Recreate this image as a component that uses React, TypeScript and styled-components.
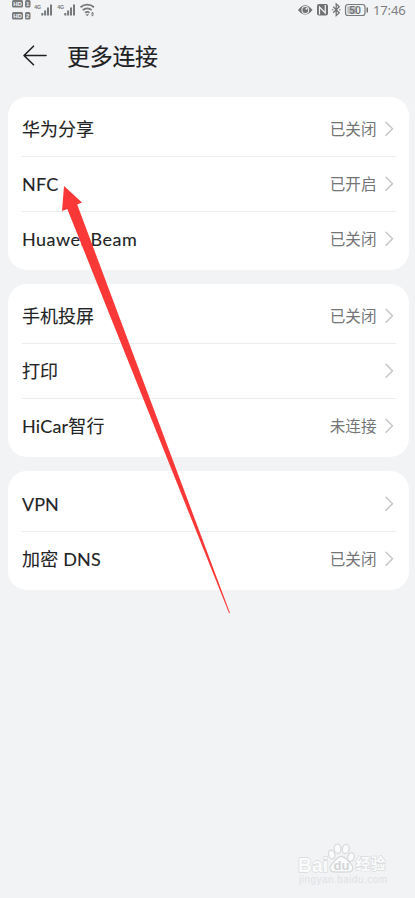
import React from 'react';
import styled, { createGlobalStyle } from 'styled-components';

const GlobalStyle = createGlobalStyle`
  * { box-sizing: border-box; }
  html, body { margin: 0; background: #f1f3f5; }
  body { font-family: Roboto, 'Noto Sans CJK SC', sans-serif; }
`;

const Screen = styled.div`
  position: relative;
  display: flex;
  flex-direction: column;
  width: 415px;
  height: 898px;
  overflow: hidden;
  background: #f1f3f5;
`;

const StatusBar = styled.div`
  display: flex;
  justify-content: space-between;
  height: 24px;
  padding: 0 9px 0 11px;
`;

const StatusGroup = styled.div`
  display: flex;
  height: 22px;
`;

const Clock = styled.span`
  width: 33px;
  font: 400 13px/21px 'Noto Sans', sans-serif;
  letter-spacing: -0.15px;
  color: #7c7e80;
  white-space: nowrap;
`;

const Header = styled.header`
  display: flex;
  align-items: center;
  height: 64px;
  padding: 0 22px;
  gap: 19px;
`;

const Title = styled.h1`
  margin: 0 0 2px;
  font: 400 23px/34px 'Noto Sans CJK SC', sans-serif;
  letter-spacing: -0.3px;
  -webkit-text-stroke: 0.12px #202122;
  color: #202122;
`;

const Cards = styled.main`
  display: flex;
  flex-direction: column;
  gap: 14px;
  padding: 9px 6px 0 8px;
`;

const Card = styled.section`
  padding: 4px 13px 4px 14px;
  border-radius: 19px;
  background: #fff;
  &:last-child { padding-top: 5px; }
`;

const Row = styled.div`
  display: flex;
  align-items: center;
  height: 55px;
  & + & { box-shadow: inset 0 1px #ebeced; }
`;

const Label = styled.span<{ $spacing?: number }>`
  flex: 1;
  font: 400 18px/26px Lato, 'Noto Sans CJK SC', sans-serif;
  letter-spacing: ${({ $spacing = 0 }) => $spacing}px;
  -webkit-text-stroke: 0.1px #232425;
  color: #232425;
`;

const Value = styled.span`
  margin: 0 7.5px 0 0;
  font: 400 15.6px/23px 'Noto Sans CJK SC', sans-serif;
  color: #747576;
`;

const Chevron = styled.svg`
  width: 12px;
  height: 18px;
`;

const Pointer = styled.svg`
  position: absolute;
  left: 60px;
  top: 184px;
`;

const Watermark = styled.svg`
  position: absolute;
  left: 292px;
  top: 837px;
`;

type Item = { label: string; value?: string; spacing?: number };

const groups: Item[][] = [
  [
    { label: '华为分享', value: '已关闭' },
    { label: 'NFC', value: '已开启', spacing: 0.2 },
    { label: 'Huawei Beam', value: '已关闭', spacing: 0.5 },
  ],
  [
    { label: '手机投屏', value: '已关闭' },
    { label: '打印' },
    { label: 'HiCar智行', value: '未连接', spacing: 0.2 },
  ],
  [{ label: 'VPN' }, { label: '加密 DNS', value: '已关闭', spacing: 0.2 }],
];

const tags = [
  { y: 0, digit: '1' },
  { y: 12, digit: '2' },
];

const signals = [24, 47];

const SignalIcons = () => (
  <svg width="90" height="22" fill="#77797b">
    {tags.map(({ y, digit }) => (
      <g key={digit} transform={`translate(0 ${y})`}>
        <rect x="1" y="0" width="11" height="7.5" rx="1.5" />
        <rect x="14" y="0" width="5.5" height="7.5" rx="1.5" />
        <g fill="#f1f3f5" fontFamily="Liberation Sans" fontWeight="700" fontSize="6">
          <text x="2.2" y="6">HD</text>
          <text x="15.1" y="6">{digit}</text>
        </g>
      </g>
    ))}
    {signals.map((x) => (
      <g key={x} transform={`translate(${x} 0)`}>
        <text x="-0.8" y="9" fontFamily="Liberation Sans" fontWeight="700" fontSize="6" textLength="7" lengthAdjust="spacingAndGlyphs">4G</text>
        <rect x="6.3" y="13" width="2" height="2.5" />
        <rect x="9.1" y="10.5" width="2" height="5" />
        <rect x="12" y="7.5" width="2" height="8" />
        <rect x="15" y="4.5" width="2" height="11" />
      </g>
    ))}
    <g fill="none" stroke="#77797b" strokeWidth="1.8">
      <path d="M69.5 7.2a10.3 10.3 0 0 1 13.5 0M71.8 10.2a6.7 6.7 0 0 1 8.9 0M74.1 12.8a3.3 3.3 0 0 1 4.3 0" />
    </g>
    <path d="M74.5 14.2h3.5l-1.75 2zM81.5 11.8l1.6 2h-3.2zM81.5 16.6l1.6-2h-3.2z" />
  </svg>
);

const DeviceIcons = () => (
  <svg width="75" height="22" fill="#6f7173">
    <path d="M0 10Q7.2 .6 14.5 10Q7.2 19.2 0 10Z" />
    <circle cx="7.3" cy="10" r="3.9" fill="#f1f3f5" />
    <circle cx="7.3" cy="10" r="2.9" />
    <circle cx="8.5" cy="8.8" r="1" fill="#f1f3f5" />
    <rect x="19" y="4" width="11" height="11.5" rx="2" />
    <path d="M21.5 14.5V7L27.3 13V5" fill="none" stroke="#f1f3f5" strokeWidth="1.2" />
    <path d="M35.2 6.8l6 6-3 2.8V4l3 2.8-6 6" fill="none" stroke="#6f7173" strokeWidth="1.25" />
    <path d="M33.8 9.8h1.6M41 9.8h1.6" stroke="#6f7173" />
    <rect x="47.5" y="4.5" width="19.5" height="11" rx="2.5" fill="none" stroke="#77797b" strokeWidth="1.2" />
    <rect x="49.2" y="6.2" width="9.5" height="7.6" rx="1" fill="#bfc1c3" />
    <path d="M68.5 7.5h1.5v5h-1.5z" />
    <text x="51" y="13.8" fontFamily="Roboto" fontWeight="500" fontSize="10.5">50</text>
  </svg>
);

export default function App() {
  return (
    <>
      <GlobalStyle />
      <Screen>
        <StatusBar>
          <StatusGroup><SignalIcons /></StatusGroup>
          <StatusGroup><DeviceIcons /><Clock>17:46</Clock></StatusGroup>
        </StatusBar>
        <Header>
          <svg width="26" height="24" fill="none" stroke="#202122" strokeWidth="1.6" strokeLinecap="round" strokeLinejoin="round">
            <path d="M24 11.5H2M11.5 2.2L2 11.5l9.5 9.2" />
          </svg>
          <Title>更多连接</Title>
        </Header>
        <Cards>
          {groups.map((items) => (
            <Card key={items[0].label}>
              {items.map(({ label, value, spacing }) => (
                <Row key={label}>
                  <Label $spacing={spacing}>{label}</Label>
                  {value && <Value>{value}</Value>}
                  <Chevron fill="none" stroke="#c5c6c7" strokeWidth="1.5" strokeLinecap="round" strokeLinejoin="round">
                    <path d="M2 2.2L8.5 8.7 2 15.2" />
                  </Chevron>
                </Row>
              ))}
            </Card>
          ))}
        </Cards>
        <Pointer width="174" height="432" fill="#fb3838">
          <path d="M4 2L22 18.5L17.2 20.5L170 429L169 429L7.3 25L2 27Z" />
        </Pointer>
        <Watermark width="105" height="52" fill="#fafbfb" stroke="#d9dbdd" strokeWidth="1.3">
          <ellipse cx="39.7" cy="17.5" rx="3.2" ry="4.4" transform="rotate(-15 39.7 17.5)" />
          <ellipse cx="45.6" cy="11.7" rx="3.4" ry="4.6" transform="rotate(-5 45.6 11.7)" />
          <ellipse cx="53.7" cy="12" rx="3.4" ry="4.6" transform="rotate(10 53.7 12)" />
          <ellipse cx="59" cy="20" rx="3.2" ry="4.5" transform="rotate(15 59 20)" />
          <path d="M49.5 19.5c4 0 5.5 4 9 7 4.500 4.500 2 8.500-2.500 8.500h-13c-5 0-7-4-2.500-8.500 3-3.500 5-7 9-7Z" />
          <text x="6" y="34.5" fontFamily="Liberation Sans" fontWeight="700" fontSize="19.5" textLength="30" lengthAdjust="spacingAndGlyphs" paintOrder="stroke">Bai</text>
          <text x="41.500" y="33" fontFamily="Liberation Sans" fontWeight="700" fontSize="13" fill="#d3d5d7" stroke="none">du</text>
          <text x="63.5" y="32" fontFamily="Noto Sans CJK SC" fontWeight="700" fontSize="15" paintOrder="stroke">经验</text>
          <text x="7" y="46" fontFamily="Liberation Sans" fontSize="10" textLength="88" fill="#e0e2e4" stroke="none">jingyan.baidu.com</text>
        </Watermark>
      </Screen>
    </>
  );
}
